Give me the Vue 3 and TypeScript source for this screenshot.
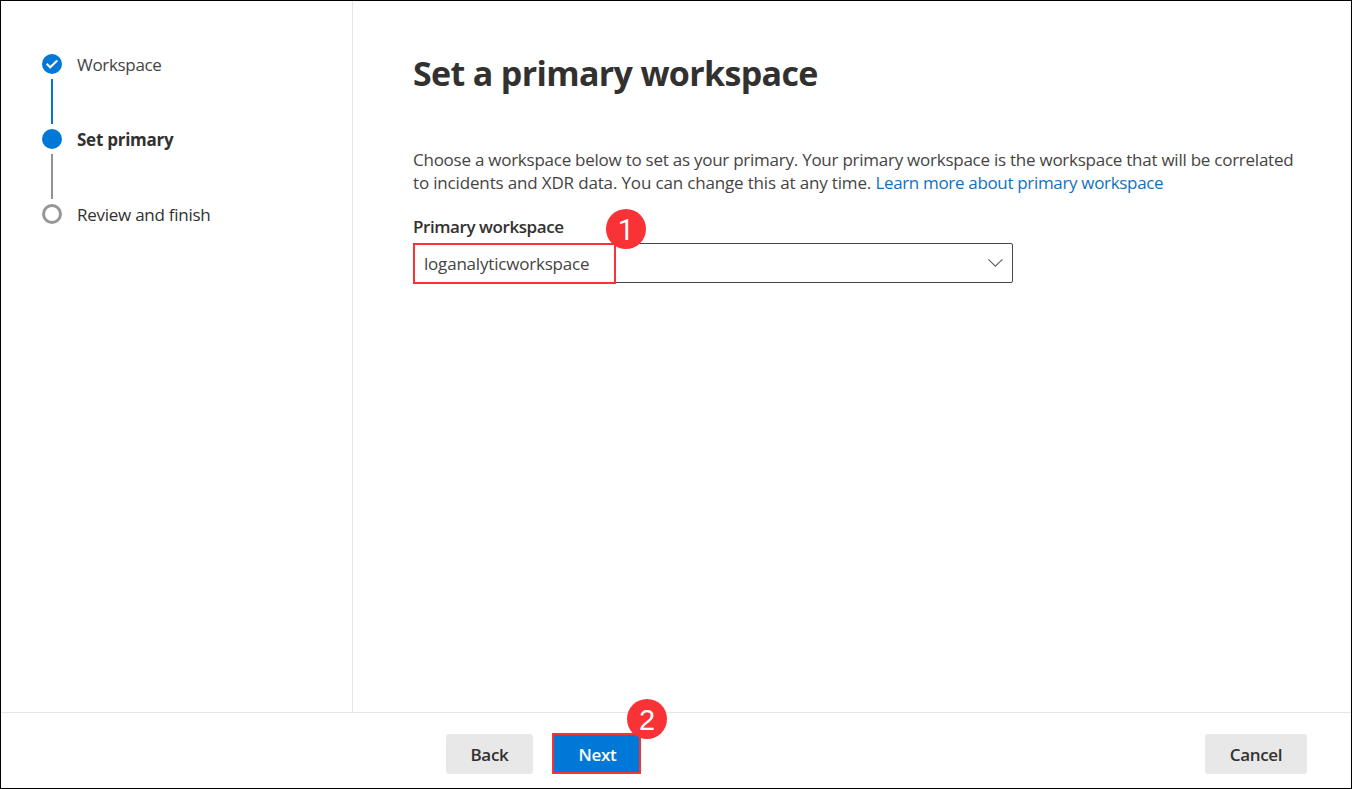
<script setup lang="ts">
interface Step {
  label: string
  state: 'done' | 'current' | 'todo'
}

const steps: Step[] = [
  { label: 'Workspace', state: 'done' },
  { label: 'Set primary', state: 'current' },
  { label: 'Review and finish', state: 'todo' },
]

const selected = 'loganalyticworkspace'
</script>

<template>
  <div class="wizard">
    <div class="body">
      <nav class="sidebar">
        <ol class="steps">
          <li v-for="step in steps" :key="step.label" class="step" :class="step.state">
            <span class="marker">
              <svg v-if="step.state === 'done'" class="check" viewBox="0 0 20 20">
                <path d="M4.7 9.8 8.2 13.2 15.3 6.4" />
              </svg>
            </span>
            <span class="step-label">{{ step.label }}</span>
          </li>
        </ol>
      </nav>

      <main class="content">
        <h1>Set a primary workspace</h1>
        <p class="intro">
          <span class="line first">Choose a workspace below to set as your primary. Your primary workspace is the workspace that will be correlated</span>
          <span class="line second">to incidents and XDR data. You can change this at any time. <a class="link">Learn more about primary workspace</a></span>
        </p>
        <label class="field-label">Primary workspace</label>
        <div class="dropdown">
          <div class="value"><span>{{ selected }}</span></div>
          <svg class="chevron" viewBox="0 0 16 10">
            <path d="M1.4 1.4 8.4 8.2 15.4 1.4" />
          </svg>
          <span class="callout callout-one">1</span>
        </div>
      </main>
    </div>

    <footer class="footer">
      <button class="btn back">Back</button>
      <div class="next-wrap">
        <button class="btn next">Next</button>
        <span class="callout callout-two">2</span>
      </div>
      <button class="btn cancel">Cancel</button>
    </footer>
  </div>
</template>

<style>
body {
  margin: 0;
  background: #fff;
}
</style>

<style scoped>
.wizard {
  box-sizing: border-box;
  width: 1352px;
  height: 789px;
  border: 1px solid #000;
  background: #fff;
  display: flex;
  flex-direction: column;
  overflow: hidden;
  color: #323130;
  font-family: 'Segoe UI', 'Open Sans', 'Noto Sans', sans-serif;
  font-size: 17px;
}

.body {
  flex: 1;
  display: flex;
  min-height: 0;
}

.sidebar {
  box-sizing: border-box;
  width: 352px;
  padding: 53px 0 0 41px;
  border-right: 1px solid #e5e5e5;
}

.steps {
  list-style: none;
  margin: 0;
  padding: 0;
}

.step {
  display: grid;
  grid-template-columns: 20px auto;
  grid-template-rows: 20px 55px;
  column-gap: 15px;
}

.step:not(:last-child)::after {
  content: '';
  grid-column: 1;
  width: 2px;
  height: 45px;
  margin: 5px auto 0;
  background: #929292;
}

.step.done::after {
  background: #0078d7 !important;
}

.marker {
  box-sizing: border-box;
  width: 20px;
  height: 20px;
  border-radius: 50%;
  background: #0078d7;
}

.todo .marker {
  background: #fff;
  border: 3px solid #969696;
}

.check {
  display: block;
  width: 20px;
  height: 20px;
}

.check path {
  fill: none;
  stroke: #fff;
  stroke-width: 2.1;
}

.step-label {
  line-height: 22px;
  white-space: nowrap;
  letter-spacing: -0.26px;
}

.done .step-label {
  color: #454443;
  letter-spacing: -0.32px;
}

.current .step-label {
  font-weight: 700;
  letter-spacing: -0.25px;
}

.content {
  flex: 1;
  padding: 47px 0 0 60px;
}

h1 {
  margin: 0;
  font-size: 34px;
  line-height: 50px;
  font-weight: 700;
  letter-spacing: -0.66px;
  white-space: nowrap;
}

.intro {
  margin: 50px 0 0;
}

.line {
  display: block;
  line-height: 23px;
  white-space: nowrap;
  letter-spacing: -0.25px;
  color: #454443;
}

.second {
  letter-spacing: -0.16px;
}

.link {
  color: #0f72bf;
  letter-spacing: -0.33px;
}

.field-label {
  display: block;
  margin-top: 21px;
  line-height: 23px;
  font-weight: 600;
  letter-spacing: -0.42px;
}

.dropdown {
  position: relative;
  box-sizing: border-box;
  width: 600px;
  height: 40px;
  margin-top: 5px;
  border: 1px solid #484644;
  border-radius: 2px;
  display: flex;
  align-items: center;
  justify-content: space-between;
  padding-right: 9px;
}

.value {
  box-sizing: border-box;
  flex: none;
  width: 203px;
  height: 41px;
  margin: 0 0 -1px -1px;
  padding-left: 9px;
  border: 2px solid #f93235;
  line-height: 37px;
  letter-spacing: -0.2px;
  color: #454443;
}

.chevron {
  width: 16px;
  height: 10px;
}

.chevron path {
  fill: none;
  stroke: #605e5c;
  stroke-width: 1.1;
}

.callout {
  position: absolute;
  width: 40px;
  height: 40px;
  border-radius: 50%;
  background: #f93235;
  color: #fff;
  font: 29px/42px 'Liberation Sans', Arial, sans-serif;
  text-align: center;
}

.callout-one {
  left: 192px;
  top: -35px;
  font-family: Roboto, Arial, sans-serif;
}

.footer {
  box-sizing: border-box;
  height: 76px;
  flex: none;
  border-top: 1px solid #e5e5e5;
  padding: 20px 44px 0 445px;
  display: flex;
  align-items: flex-start;
}

.btn {
  box-sizing: border-box;
  height: 40px;
  margin: 1px 0 0;
  padding: 1px 0 0;
  border: 0;
  border-radius: 3px;
  background: #e8e8e8;
  color: #323130;
  font: inherit;
  font-weight: 600;
  line-height: 40px;
  letter-spacing: -0.3px;
}

.back {
  width: 87px;
}

.next-wrap {
  position: relative;
  margin-left: 19px;
}

.next {
  display: block;
  width: 89px;
  height: 41px;
  margin: 0;
  padding: 1px 0 0 2px;
  border: 2px solid #f93235;
  border-radius: 0;
  background: #0078d7;
  color: #fff;
  line-height: 38px;
}

.callout-two {
  left: 75px;
  top: -34px;
}

.cancel {
  width: 102px;
  margin-left: auto;
}
</style>
